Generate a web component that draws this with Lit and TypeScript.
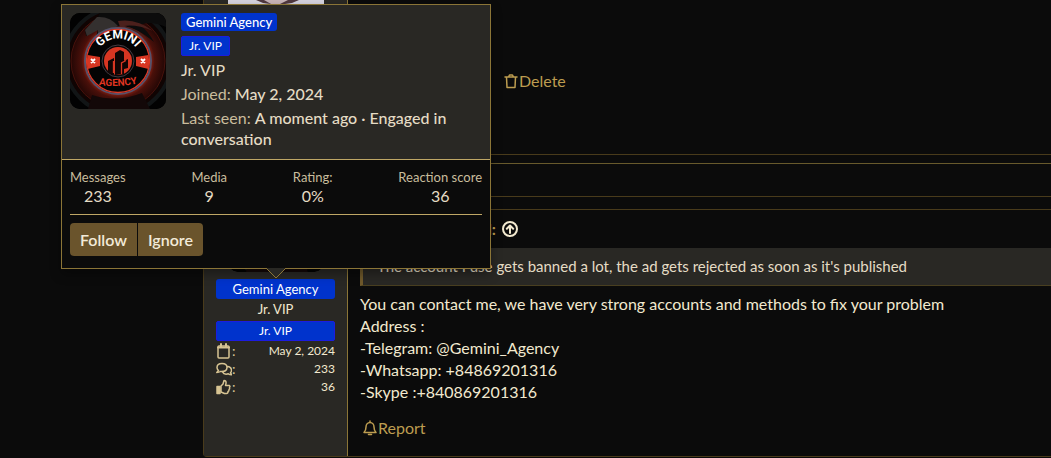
import { LitElement, html, css, svg, nothing } from "lit";
import { customElement, property } from "lit/decorators.js";

const FONT = css`Lato, "Open Sans", sans-serif`;

@customElement("agency-avatar")
class AgencyAvatar extends LitElement {
  static styles = css`
    :host { display: block; overflow: hidden; border-radius: 10px; background: #000; }
    svg { display: block; width: 100%; }
  `;

  @property({ type: Boolean }) plain = false;

  render() {
    return html`<svg viewBox="0 0 96 96" role="img" aria-label="Gemini Agency">
      <defs>
        <radialGradient id="glow">
          <stop offset="0.66" stop-color="#a32615" />
          <stop offset="0.78" stop-color="#4a100a" />
          <stop offset="1" stop-color="#240705" />
        </radialGradient>
        <path id="top" d="M25.500 48a22.500 22.500 0 0 1 45 0" />
        <path id="low" d="M18 70Q48 77 78 68" />
      </defs>
      <rect width="96" height="96" fill="#020202" />
      <circle cx="48" cy="48" r="53" fill="#100403" stroke="#121516" stroke-width="4" />
      <circle cx="48" cy="48" r="47" fill="url(#glow)" stroke="#48120c" />
      <path d="M0 0H96V14Q80 7 70 12Q78 18 84 29Q66 14 52 13Q38 13 26 24L28 16L16 23L15 17L25 9L30 0Z" fill="#0c0c0c" />
      <path d="M27 4Q40 3 48 13L28 23L28 17L17 23L15 17Z" fill="#34302f" />
      <path d="M48 8Q67 5 83 18Q66 11 54 13Q68 15 78 27Q66 17 50 14Z" fill="#4b201c" />
      <path d="M22 82Q46 90 72 80L80 96H18Z" fill="#130808" />
      <circle cx="48" cy="48" r="33" fill="#030303" stroke="#56526b" stroke-width="2" />
      <circle cx="48" cy="48" r="31.5" fill="none" stroke="#dc3926" stroke-width="1.3" />
      <path d="M17.5 42L30 44V53L17.5 56Q16 49 17.5 42Z" fill="#d83622" />
      <path d="M78.500 42L66 44V53L78.500 56Q80 49 78.500 42Z" fill="#d83622" />
      <path d="M21 46l4 4m0-4l-4 4M71 46l4 4m0-4l-4 4" stroke="#fff" stroke-width="1.8" />
      <circle cx="48" cy="48" r="16" fill="#080808" stroke="#453b42" />
      <circle cx="48" cy="48" r="14" fill="#d83622" />
      <path d="M38 60V48L44 45V62M45 62V40L50 37L54 39V61M54 56V48L58 46V55" fill="#110504" />
      <path d="M43.500 60V48M51.500 61V50L56 47.500" fill="none" stroke="#d83622" stroke-width="1.3" />
      ${this.plain ? nothing : svg`<g font-family="Roboto, sans-serif" font-weight="700" text-anchor="middle">
        <text font-size="12" fill="#fff"><textPath href="#top" startOffset="50%">GEMINI</textPath></text>
        <text font-size="10" fill="#df3421"><textPath href="#low" startOffset="50%">AGENCY</textPath></text>
      </g>`}
    </svg>`;
  }
}

@customElement("member-card")
class MemberCard extends LitElement {
  static styles = css`
    :host {
      display: block; box-sizing: border-box; border: 1px solid #8b7537;
      background: #0b0b0b; color: #e5dcc5; font: 16px/21px ${FONT};
      box-shadow: 0 5px 10px rgba(0, 0, 0, 0.35);
    }
    .head { display: flex; gap: 15px; padding: 8px 8px 9px; background: #292824; border-bottom: 1px solid #bfa766; }
    agency-avatar { width: 96px; height: 96px; flex: none; }
    .info { display: flex; flex-direction: column; align-items: flex-start; gap: 3px; min-width: 0; }
    .name, .banner { color: #fff; background: #0033cc; border-radius: 3px; text-decoration: none; }
    .name { font-size: 13px; line-height: 18px; padding: 0 5px; }
    .name, .value { font-weight: 500; }
    .banner { box-sizing: border-box; border: 1px solid #1c1ce0; font-size: 12px; line-height: 18px; padding: 0 7px; margin: 2px 0 0; border-radius: 2px; }
    .muted { color: #c9bd9d; }
    .body { padding: 8px; }
    .stats { display: flex; justify-content: space-between; margin: 0; padding-bottom: 8px; border-bottom: 1px solid #bfa766; text-align: center; }
    dt { font-size: 13px; line-height: 18px; color: #c9bd9d; }
    dd { margin: 0; line-height: 20px; }
    .buttons { display: flex; gap: 1px; padding: 8px 0 4px; }
    button {
      border: 0; background: #6a542c; color: #f2ead8; font: 600 16px/21px ${FONT};
      padding: 6px 10px;
    }
    button:first-child { border-radius: 4px 0 0 4px; }
    button:last-child { border-radius: 0 4px 4px 0; }
    .arrow { position: absolute; left: 204px; top: 100%; display: block; }
    .head { padding-bottom: 10px; }
  `;

  render() {
    const stats = [["Messages", "233"], ["Media", "9"], ["Rating:", "0%"], ["Reaction score", "36"]];
    return html`
      <div class="head">
        <agency-avatar></agency-avatar>
        <div class="info">
          <a class="name" href="#">Gemini Agency</a>
          <span class="banner">Jr. VIP</span>
          <span>Jr. VIP</span>
          <span><span class="muted">Joined:</span> <span class="value">May 2, 2024</span></span>
          <span><span class="muted">Last seen:</span> <span class="value">A moment ago · Engaged in conversation</span></span>
        </div>
      </div>
      <div class="body">
        <dl class="stats">${stats.map(([k, v]) => html`<div><dt>${k}</dt><dd>${v}</dd></div>`)}</dl>
        <div class="buttons"><button type="button">Follow</button><button type="button">Ignore</button></div>
      </div>
      <svg class="arrow" width="20" height="11" viewBox="0 0 20 11" aria-hidden="true">
        <path d="M0 0L10 10L20 0" fill="#292824" stroke="#8b7537" />
      </svg>`;
  }
}

const icon = (body: unknown) => html`<svg class="icon" viewBox="0 0 16 16" aria-hidden="true">${body}</svg>`;
const trash = svg`<path d="M2 4H14M3.500 4l.5 10.500h8L12.500 4M5.500 4l1-2h3l1 2" />`;
const bell = svg`<path d="M8 1v1.500M2 12.500q2-2 2-5.500a4 4.500 0 0 1 8 0q0 3.500 2 5.500zM6.500 14.500h3" />`;
const calendar = svg`<rect x="2" y="3" width="11" height="12" rx="1" /><path d="M2 4.500h11M5 1v2.500M10 1v2.500" stroke-width="2" />`;
const chats = svg`<path d="M2.500 9.500L.8 11.500q2.200 0 3.600-1Q11 11 11 6.500 11 2.500 6 2.500T1 6.500q0 1.700 1.500 3ZM11.500 5.500q4 .5 4 4 0 1.200-1 2.300l1.200 2q-2 0-3.400-1Q8 14 6.500 11" />`;
const thumb = svg`<path d="M5 7L7 5 8 1.500q2.500 0 2 3L9.500 6.500h4q1 1 0 2 .5 1.500-.5 2.200 0 1.500-1 1.800 0 2-1.500 2H8.500l-3.500-1.500z" /><rect x="1" y="7.500" width="3" height="7" fill="currentColor" />`;
const arrowUp = svg`<circle cx="8" cy="8" r="7" /><path d="M8 12V4.500M4.800 7.700L8 4.500 11.200 7.700" />`;

@customElement("app-root")
class AppRoot extends LitElement {
  static styles = css`
    :host {
      display: block; position: relative; min-height: 100vh; overflow: hidden; box-sizing: border-box;
      background: #0b0b0b; color: #f2e9cf; font: 16px/22px ${FONT};
    }
    .thread { margin-left: 203px; display: flex; flex-direction: column; }
    .post { display: flex; border: 1px solid #493b1b; border-right: 0; border-radius: 4px 0 0 4px; box-sizing: border-box; }
    .post.first { border-top: 0; border-radius: 0 0 0 4px; min-height: 155px; margin-bottom: 8px; }
    .panel { height: 32px; border: 1px solid #493b1b; border-top-color: #685a2c; border-right: 0; margin-bottom: 12px; }
    .user { width: 144px; flex: none; box-sizing: border-box; background: #292824; border-right: 1px solid #8b7537; }
    .second .user { padding: 10px 12px 60px; }
    .photo { display: block; width: 96px; margin: 0 auto; }
    .crop { width: 96px; height: 52px; margin: 0 auto 7px; border-radius: 10px; overflow: hidden; display: flex; align-items: flex-end; }
    .crop agency-avatar { width: 96px; flex: none; }
    .tag { display: block; text-align: center; background: #0033cc; color: #fff; border-radius: 3px; line-height: 20px; text-decoration: none; font-size: 13px; }
    .title { text-align: center; font-size: 13px; line-height: 20px; padding-bottom: 2px; }
    .banner { border: 1px solid #1c1ce0; border-radius: 2px; font-size: 12px; line-height: 18px; }
    .facts { margin: 1px 0 0; font-size: 12px; line-height: 18px; }
    .facts div { display: flex; justify-content: space-between; align-items: flex-start; }
    .facts dt { display: flex; align-items: center; font-size: 14px; color: #d7c493; }
    .facts dd { margin: 0; }
    .icon { width: 16px; height: 16px; fill: none; stroke: currentColor; stroke-width: 1.5; stroke-linejoin: round; stroke-linecap: round; flex: none; }
    .main { flex: 1; min-width: 0; padding-left: 12px; }
    .first .main { padding: 70px 0 0 155px; }
    .action { display: inline-flex; align-items: center; color: #bd9d50; text-decoration: none; }
    .source { display: flex; align-items: center; gap: 6px; height: 38px; font-weight: 700; }
    .said { width: 136px; text-align: right; color: #bd9d50; }
    .source a { display: flex; color: #f2e9cf; }
    .source .icon { stroke-width: 2; }
    blockquote { margin: 0 0 7px; padding: 7px 14px 8px; border-left: 3px solid #6f592b; border-bottom: 1px solid #493f20; background: #292824; color: #e5dcc5; font-size: 15px; }
    .text { margin: 0; }
    .second .action { margin: 14px 0 0 2px; }
    member-card { position: absolute; left: 61px; top: 4px; width: 430px; }
  `;

  render() {
    return html`
      <main class="thread">
        <article class="post first">
          <div class="user">
            <svg class="photo" viewBox="0 0 96 5" aria-hidden="true">
              <rect width="96" height="5" fill="#d5d3df" />
              <path d="M28 0h43l-7 3-14 2-15-2z" fill="#50383f" /><path d="M36 0h24l-8 4h-9z" fill="#c8b4b8" />
            </svg>
          </div>
          <div class="main"><a class="action" href="#">${icon(trash)}Delete</a></div>
        </article>
        <div class="panel"></div>
        <article class="post second">
          <div class="user">
            <div class="crop"><agency-avatar plain></agency-avatar></div>
            <a class="tag" href="#">Gemini Agency</a>
            <div class="title">Jr. VIP</div>
            <div class="tag banner">Jr. VIP</div>
            <dl class="facts">
              <div><dt>${icon(calendar)}:</dt><dd>May 2, 2024</dd></div>
              <div><dt>${icon(chats)}:</dt><dd>233</dd></div>
              <div><dt>${icon(thumb)}:</dt><dd>36</dd></div>
            </dl>
          </div>
          <div class="main">
            <div class="source"><span class="said">said:</span><a href="#" aria-label="Go to quoted post">${icon(arrowUp)}</a></div>
            <blockquote>The account I use gets banned a lot, the ad gets rejected as soon as it's published</blockquote>
            <p class="text">
              You can contact me, we have very strong accounts and methods to fix your problem<br />
              Address :<br />
              -Telegram: @Gemini_Agency<br />
              -Whatsapp: +84869201316<br />
              -Skype :+840869201316
            </p>
            <a class="action" href="#">${icon(bell)}Report</a>
          </div>
        </article>
      </main>
      <member-card></member-card>`;
  }
}
